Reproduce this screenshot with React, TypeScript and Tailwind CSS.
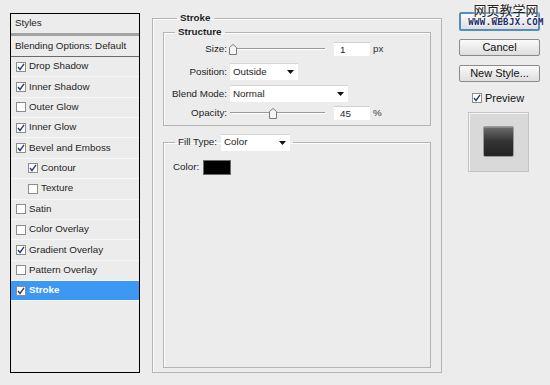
const items = [
  { label: "Drop Shadow", on: true },
  { label: "Inner Shadow", on: true },
  { label: "Outer Glow", on: false },
  { label: "Inner Glow", on: true },
  { label: "Bevel and Emboss", on: true },
  { label: "Contour", on: true, sub: true },
  { label: "Texture", on: false, sub: true },
  { label: "Satin", on: false },
  { label: "Color Overlay", on: false },
  { label: "Gradient Overlay", on: true },
  { label: "Pattern Overlay", on: false },
  { label: "Stroke", on: true, active: true },
];

const Check = ({ on }: { on: boolean }) => (
  <span className="w-[10px] h-[10px] border border-[#8c8c8c] bg-white flex items-center justify-center shrink-0">
    {on && (
      <svg width="8" height="8" viewBox="0 0 8 8">
        <path d="M1 4 L3 6.5 L7 0.8" fill="none" stroke="#2a3f7a" strokeWidth="1.4" />
      </svg>
    )}
  </span>
);

const Arrow = () => (
  <svg width="7" height="4" viewBox="0 0 7 4">
    <path d="M0 0 H7 L3.5 4 Z" fill="#111" />
  </svg>
);

const Select = ({ value, w }: { value: string; w: string }) => (
  <div className={`${w} h-[17px] bg-white flex items-center justify-between pl-[3px] pr-[4px] border-t border-[#d6d6d6]`}>
    <span>{value}</span>
    <Arrow />
  </div>
);

const Slider = ({ pos }: { pos: number }) => (
  <div className="relative w-[95px] h-[12px] flex items-center">
    <div className="w-full h-[2px] border-t border-[#9a9a9a] border-b border-b-white" />
    <svg
      className="absolute top-[1px]"
      style={{ left: pos }}
      width="8"
      height="11"
      viewBox="0 0 8 11"
    >
      <path d="M0.5 3.5 L4 0.5 L7.5 3.5 V10.5 H0.5 Z" fill="#f4f4f4" stroke="#7a7a7a" />
    </svg>
  </div>
);

const NumBox = ({ value, unit }: { value: string; unit: string }) => (
  <div className="flex items-center ml-[9px]">
    <div className="w-[36px] h-[14px] bg-white border-t border-[#cfcfcf] pl-[6px] flex items-center">
      {value}
    </div>
    <span className="ml-[3px] text-[#333]">{unit}</span>
  </div>
);

const Btn = ({ label, def }: { label: string; def?: boolean }) => (
  <div
    className={`w-[81px] flex items-center justify-center rounded-[2px] text-[11px] text-[#111] bg-gradient-to-b from-[#fafafa] to-[#dedede] ${
      def ? "h-[19px] border-2 border-[#4f8fc0]" : "h-[17px] border border-[#8a8a8a]"
    }`}
  >
    {label}
  </div>
);

export default function App() {
  return (
    <div className="w-[550px] h-[385px] bg-[#ececec] flex items-start font-['Liberation_Sans',sans-serif] text-[9.8px] text-[#1e1e1e] overflow-hidden">
      {/* styles list */}
      <div className="ml-[10px] mt-[13px] w-[130px] h-[360px] border border-black flex flex-col">
        <div className="h-[19px] pl-[4px] flex items-center">Styles</div>
        <div className="h-[3px] bg-[#a4a4a4]" />
        <div className="h-[21px] pl-[4px] flex items-center border-b border-[#6a6a6a]">
          Blending Options: Default
        </div>
        {items.map((it) => (
          <div
            key={it.label}
            className={`h-[20.36px] shrink-0 flex items-center gap-[3px] border-b border-[#f7f7f7] ${
              it.sub ? "pl-[17px]" : "pl-[5px]"
            } ${it.active ? "bg-[#3d98f3] text-white font-bold" : ""}`}
          >
            <Check on={it.on} />
            <span>{it.label}</span>
          </div>
        ))}
      </div>

      {/* main settings */}
      <fieldset className="ml-[12px] mt-[11px] w-[290px] h-[362px] border border-[#b4b4b4] px-[10px] shadow-[inset_1px_1px_0_#fff]">
        <legend className="ml-[14px] px-[3px] font-bold">Stroke</legend>
        <fieldset className="-mt-[1px] h-[101px] border border-[#b4b4b4] shadow-[inset_1px_1px_0_#fff]">
          <legend className="ml-[11px] px-[3px] font-bold">Structure</legend>
          <div className="grid grid-cols-[63px_auto] items-center gap-x-[3px] mt-[1px]">
            <span className="text-right">Size:</span>
            <div className="flex items-center h-[18px]">
              <Slider pos={-1} />
              <NumBox value="1" unit="px" />
            </div>
            <span className="text-right mt-[5px]">Position:</span>
            <div className="mt-[5px]">
              <Select value="Outside" w="w-[68px]" />
            </div>
            <span className="text-right mt-[5px]">Blend Mode:</span>
            <div className="mt-[5px]">
              <Select value="Normal" w="w-[118px]" />
            </div>
            <span className="text-right mt-[2px]">Opacity:</span>
            <div className="flex items-center h-[18px] mt-[2px]">
              <Slider pos={39} />
              <NumBox value="45" unit="%" />
            </div>
          </div>
        </fieldset>
        <fieldset className="mt-[8px] h-[234px] border border-[#b4b4b4] shadow-[inset_1px_1px_0_#fff]">
          <legend className="ml-[11px] px-[3px] flex items-center gap-[4px]">
            <span>Fill Type:</span>
            <Select value="Color" w="w-[69px]" />
          </legend>
          <div className="flex items-center mt-[9px] ml-[9px] gap-[4px]">
            <span>Color:</span>
            <div className="w-[28px] h-[15px] bg-black border border-[#6a6a6a]" />
          </div>
        </fieldset>
      </fieldset>

      {/* buttons */}
      <div className="relative ml-[17px] mt-[12px] w-[81px] flex flex-col">
        <Btn label="OK" def />
        <div className="mt-[8px]">
          <Btn label="Cancel" />
        </div>
        <div className="mt-[9px]">
          <Btn label="New Style..." />
        </div>
        <div className="mt-[8px] ml-[13px] flex items-center gap-[3px] text-[11px] text-[#111]">
          <Check on />
          <span>Preview</span>
        </div>
        <div className="mt-[5px] ml-[9px] w-[61px] h-[60px] shrink-0 bg-[#d9d9d9] border border-[#c4c4c4] shadow-[inset_1px_1px_0_#f4f4f4] flex items-center justify-center">
          <div className="w-[31px] h-[31px] rounded-[2px] border border-[#9a9a9a] bg-gradient-to-b from-[#6e6e6e] via-[#333] to-[#242424] shadow-[inset_0_1px_0_#8a8a8a]" />
        </div>
        <div className="absolute -top-[9px] left-[7px] w-[80px] flex flex-col items-center leading-none">
          <span className="text-[13px] text-[#222] font-['Noto_Sans_CJK_SC',sans-serif] [text-shadow:0_0_2px_#fff,0_0_2px_#fff]">
            网页教学网
          </span>
          <span className="mt-[2px] text-[9px] font-bold tracking-[0.4px] text-[#1c2a6a] font-['DejaVu_Sans_Mono',monospace] [text-shadow:0_0_2px_#fff,0_0_2px_#fff]">
            WWW.WEBJX.COM
          </span>
        </div>
      </div>
    </div>
  );
}
